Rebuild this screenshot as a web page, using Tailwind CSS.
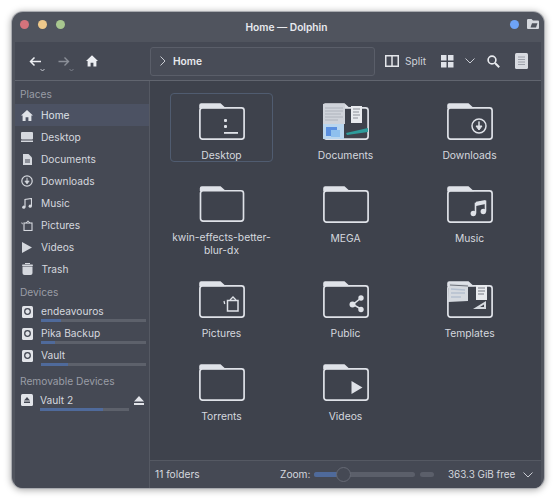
<!DOCTYPE html>
<html><head><meta charset="utf-8"><script src="https://cdn.jsdelivr.net/npm/@tailwindcss/browser@4"></script></head>
<body class="m-0 bg-white">
<svg class="hidden" width="0" height="0">
<symbol id="folder" viewBox="0 0 46 37"><path d="M0.2 5.5V2.2Q0.2 0.2 2.2 0.2H21.5L27 5.2H0.2Z" fill="#dfe2e8"/><rect x="0.9" y="4.9" width="44.2" height="31.2" rx="2.6" fill="none" stroke="#dfe2e8" stroke-width="1.7"/></symbol>
</svg>
<div class="w-[555px] h-[500px] pt-[12px] pl-[12px] font-['Inter','Liberation_Sans',sans-serif] overflow-hidden">
<div class="w-[532px] h-[476px] rounded-[11px] bg-[#50545e] px-[3px] flex flex-col overflow-hidden shadow-[0_0_0_1px_#a9abb0,0_1px_7px_1px_rgba(0,0,0,0.35)]">
  <!-- title bar -->
  <div class="h-[30px] shrink-0 flex items-center relative">
    <div class="flex gap-[9px] pl-[5px] pb-[6px] w-[60px]">
      <span class="w-[9px] h-[9px] rounded-full bg-[#d5737c]"></span>
      <span class="w-[9px] h-[9px] rounded-full bg-[#efc98b]"></span>
      <span class="w-[9px] h-[9px] rounded-full bg-[#a8c78f]"></span>
    </div>
    <div class="flex-1 text-center text-[10.2px] font-semibold text-[#e8eaee] pt-[1px] pl-[17px]">Home — Dolphin</div>
    <div class="flex items-center justify-end gap-[8px] pr-[2px] pb-[6px] w-[60px]">
      <span class="w-[9px] h-[9px] rounded-full bg-[#6ea3f6]"></span>
      <svg width="12" height="10" viewBox="0 0 12 10"><path d="M0 1.2Q0 0 1.2 0H4.5L6 1.5H11Q12 1.5 12 2.5V9Q12 10 11 10H1Q0 10 0 9Z" fill="#d5d8de"/><path d="M3.5 8.5L5 4.2H10.5L9 8.5Z" fill="#4f535d"/></svg>
    </div>
  </div>
  <!-- toolbar -->
  <div class="h-[39px] shrink-0 bg-[#454954] border-b border-[#61656f] flex items-center text-[#dfe2e8]">
    <div class="w-[135px] shrink-0 flex items-center pl-[14px] h-full">
      <svg width="16" height="18" viewBox="0 0 16 18" class="mt-[5px]"><path d="M12 6.5H1.5M5.5 2.5L1.5 6.5L5.5 10.5" fill="none" stroke="#eef0f4" stroke-width="1.5"/><path d="M11.5 14L13.5 16L15.5 14" fill="none" stroke="#c8cbd2" stroke-width="1"/></svg>
      <svg width="16" height="18" viewBox="0 0 16 18" class="ml-[13px] mt-[5px]"><path d="M0.5 6.5H10.5M6.5 2.5L10.5 6.5L6.5 10.5" fill="none" stroke="#8b8f98" stroke-width="1.4"/><path d="M11.5 14L13.5 16L15.5 14" fill="none" stroke="#7c808a" stroke-width="1"/></svg>
      <svg width="12" height="12" viewBox="0 0 12 12" class="ml-[12px]"><path d="M6 0.3L12 6H10.4V11.5H7.4V7.8H4.6V11.5H1.6V6H0Z" fill="#eceef2"/></svg>
    </div>
    <div class="w-[225px] h-[29px] shrink-0 rounded-[3px] border border-[#5a5e69] bg-[#484c57] flex items-center pl-[9px]">
      <svg width="6" height="10" viewBox="0 0 6 10"><path d="M0.5 0.5L5 5L0.5 9.5" fill="none" stroke="#c9ccd3" stroke-width="1"/></svg>
      <span class="ml-[7px] text-[10.2px] font-semibold text-[#e8eaee] pt-[2px]">Home</span>
    </div>
    <svg width="14" height="12" viewBox="0 0 14 12" class="ml-[10px]"><path d="M0.75 0.75H13.25V11.25H0.75ZM7 0.75V11.25" fill="none" stroke="#e4e6ea" stroke-width="1.5"/></svg>
    <span class="ml-[6px] text-[10.2px] text-[#cfd2d9] pt-[2px]">Split</span>
    <svg width="13" height="13" viewBox="0 0 13 13" class="ml-[15px]"><g fill="#dfe2e8"><rect width="5.5" height="5.5"/><rect x="7" width="5.5" height="5.5"/><rect y="7" width="5.5" height="5.5"/><rect x="7" y="7" width="5.5" height="5.5"/></g></svg>
    <svg width="10" height="6" viewBox="0 0 10 6" class="ml-[11px]"><path d="M0.5 0.5L5 5L9.5 0.5" fill="none" stroke="#c9ccd3" stroke-width="1"/></svg>
    <svg width="13" height="13" viewBox="0 0 13 13" class="ml-[12px]"><circle cx="5" cy="5" r="3.9" fill="none" stroke="#e8eaee" stroke-width="1.6"/><path d="M8 8L12.2 12.2" stroke="#e8eaee" stroke-width="2"/></svg>
    <svg width="13" height="16" viewBox="0 0 13 16" class="ml-[15px]"><rect width="13" height="16" rx="1.5" fill="#d8dbe1"/><path d="M3 4H10M3 6.5H10M3 9H10M3 11.5H10" stroke="#8d919a" stroke-width="0.8"/></svg>
  </div>
  <!-- main -->
  <div class="flex-1 flex min-h-0">
    <!-- sidebar -->
    <aside class="w-[135px] shrink-0 bg-[#454954] border-r border-[#555963] text-[10.2px] leading-[22px] text-[#d5d8df] pt-[2px] flex flex-col">
      <div class="h-[21px] pl-[5px] text-[#9a9da6]">Places</div>
      <div class="h-[22px] flex items-center bg-[#4c5263] pl-[6px]"><span class="w-[12px] flex justify-center"><svg width="12" height="11" viewBox="0 0 12 11"><path d="M6 0L12 5.5H10.4V11H7.4V7.2H4.6V11H1.6V5.5H0Z" fill="#dfe2e8"/></svg></span><span class="ml-[8px] text-[#dfe2e8]">Home</span></div>
      <div class="h-[22px] flex items-center pl-[6px]"><span class="w-[12px] flex justify-center"><svg width="12" height="10" viewBox="0 0 12 10"><rect width="12" height="7.5" rx="1" fill="#d5d8de"/><rect y="8.5" width="12" height="1.5" fill="#d5d8de"/></svg></span><span class="ml-[8px]">Desktop</span></div>
      <div class="h-[22px] flex items-center pl-[6px]"><span class="w-[12px] flex justify-center"><svg width="9" height="11" viewBox="0 0 9 11"><path d="M0 0H5.5L9 3.5V11H0Z" fill="#d5d8de"/><path d="M2 6H7M2 8H7" stroke="#454954"/></svg></span><span class="ml-[8px]">Documents</span></div>
      <div class="h-[22px] flex items-center pl-[6px]"><span class="w-[12px] flex justify-center"><svg width="12" height="12" viewBox="0 0 12 12"><circle cx="6" cy="6" r="5.2" fill="none" stroke="#d5d8de" stroke-width="1.2"/><path d="M6 2.8V6H8.2L6 9L3.8 6H6Z" fill="#d5d8de" stroke="#d5d8de" stroke-width="0.6"/></svg></span><span class="ml-[8px]">Downloads</span></div>
      <div class="h-[22px] flex items-center pl-[6px]"><span class="w-[12px] flex justify-center"><svg width="10" height="11" viewBox="0 0 10 11"><path d="M3 9V1.5L9.5 0.5V8" fill="none" stroke="#d5d8de" stroke-width="1.2"/><circle cx="1.8" cy="9.2" r="1.6" fill="#d5d8de"/><circle cx="8.2" cy="8.2" r="1.6" fill="#d5d8de"/></svg></span><span class="ml-[8px]">Music</span></div>
      <div class="h-[22px] flex items-center pl-[6px]"><span class="w-[12px] flex justify-center"><svg width="12" height="11" viewBox="0 0 12 11"><rect x="3" y="3" width="8" height="7.5" fill="none" stroke="#d5d8de" stroke-width="1.1"/><path d="M5 3L7 0.8L9 3M0.8 2.5L1.4 4.2" fill="none" stroke="#d5d8de"/></svg></span><span class="ml-[8px]">Pictures</span></div>
      <div class="h-[22px] flex items-center pl-[6px]"><span class="w-[12px] flex justify-center"><svg width="10" height="11" viewBox="0 0 10 11"><path d="M0 0L10 5.5L0 11Z" fill="#d5d8de"/></svg></span><span class="ml-[8px]">Videos</span></div>
      <div class="h-[22px] flex items-center pl-[6px]"><span class="w-[12px] flex justify-center"><svg width="11" height="12" viewBox="0 0 11 12"><rect x="3" y="0" width="5" height="1" fill="#d5d8de"/><rect y="1.5" width="11" height="1.5" rx="0.7" fill="#d5d8de"/><path d="M0.5 3.6H10.5V10Q10.5 12 8.5 12H2.5Q0.5 12 0.5 10Z" fill="#d5d8de"/></svg></span><span class="ml-[8.5px]">Trash</span></div>
      <div class="h-[22px] pl-[5px] mt-[1px] text-[#9a9da6]">Devices</div>
      <div class="h-[22px] flex items-start pl-[7px]"><svg width="11" height="12" viewBox="0 0 11 12" class="mt-[3px]"><rect width="11" height="12" rx="1.5" fill="#e2e4e9"/><circle cx="5.5" cy="5.5" r="2.8" fill="none" stroke="#454954" stroke-width="1.3"/></svg><div class="ml-[8px] flex-1 pr-[3px]"><div class="h-[16px] leading-[17px]">endeavouros</div><div class="h-[3px] bg-[#5d616b]"><div class="h-full w-[19%] bg-[#4f6a9b]"></div></div></div></div>
      <div class="h-[22px] flex items-start pl-[7px]"><svg width="11" height="12" viewBox="0 0 11 12" class="mt-[3px]"><rect width="11" height="12" rx="1.5" fill="#e2e4e9"/><circle cx="5.5" cy="5.5" r="2.8" fill="none" stroke="#454954" stroke-width="1.3"/></svg><div class="ml-[8px] flex-1 pr-[3px]"><div class="h-[16px] leading-[17px]">Pika Backup</div><div class="h-[3px] bg-[#5d616b]"><div class="h-full w-[13%] bg-[#4f6a9b]"></div></div></div></div>
      <div class="h-[22px] flex items-start pl-[7px]"><svg width="11" height="12" viewBox="0 0 11 12" class="mt-[3px]"><rect width="11" height="12" rx="1.5" fill="#e2e4e9"/><circle cx="5.5" cy="5.5" r="2.8" fill="none" stroke="#454954" stroke-width="1.3"/></svg><div class="ml-[8px] flex-1 pr-[3px]"><div class="h-[16px] leading-[17px]">Vault</div><div class="h-[3px] bg-[#5d616b]"><div class="h-full w-[26%] bg-[#4f6a9b]"></div></div></div></div>
      <div class="h-[22px] pl-[5px] mt-[1px] text-[#9a9da6]">Removable Devices</div>
      <div class="h-[22px] flex items-start pl-[6px]"><svg width="12" height="12" viewBox="0 0 12 12" class="mt-[2px]"><rect width="12" height="12" rx="1.5" fill="#e2e4e9"/><path d="M6 3L9 6.5H3ZM3 7.5H9V9H3Z" fill="#454954"/></svg><div class="ml-[7px] w-[89px]"><div class="h-[16px] leading-[17px]">Vault 2</div><div class="h-[3px] bg-[#5d616b]"><div class="h-full w-[71%] bg-[#4f6a9b]"></div></div></div><svg width="10" height="9" viewBox="0 0 10 9" class="ml-[5px] mt-[4px]"><path d="M5 0L10 5.5H0ZM0 7H10V9H0Z" fill="#e2e4e9"/></svg></div>
    </aside>
    <!-- content -->
    <div class="flex-1 flex flex-col min-w-0 bg-[#3e424c]">
      <main class="flex-1 pt-[12px] pl-[20px] grid grid-cols-[103px_103px_103px] gap-x-[21px] gap-y-[14px] content-start text-[10.3px] leading-[13px] text-[#d5d8df] text-center">
        <div class="h-[69px] rounded-[4px] border border-[#505c70] flex flex-col items-center pt-[9px]">
          <div class="relative w-[46px] h-[37px]"><svg width="46" height="37"><use href="#folder"/></svg><svg width="15" height="16" viewBox="0 0 15 16" class="absolute left-[25px] top-[16px]"><rect x="0" y="0" width="3" height="3" rx="1" fill="#dfe2e8"/><rect x="0" y="6" width="3" height="3" rx="1" fill="#dfe2e8"/><rect x="0" y="13" width="14" height="1.8" fill="#dfe2e8"/></svg></div>
          <div class="mt-[9px]">Desktop</div>
        </div>
        <div class="h-[69px] flex flex-col items-center pt-[10px]">
          <div class="relative w-[46px] h-[37px]"><svg width="46" height="37"><use href="#folder"/>
            <rect x="0" y="1" width="22" height="20" fill="#cfd3da"/><path d="M2 5H20M2 8H20M2 11H18M2 14H20M2 17H15" stroke="#aeb3bc"/>
            <rect x="0" y="21" width="21" height="15" fill="#b9d6ef"/><rect x="3" y="24" width="11" height="9" fill="#5a8fe0"/><rect x="8" y="27" width="9" height="7" fill="#8fc0ee"/>
            <rect x="28" y="3" width="11" height="17" fill="#e8eaee"/><path d="M30 6H37M30 9H36M30 12H37M30 15H35" stroke="#8c9098"/>
            <path d="M23 30L45 25V29L24 32Z" fill="#2e9c9c"/></svg></div>
          <div class="mt-[9px]">Documents</div>
        </div>
        <div class="h-[69px] flex flex-col items-center pt-[10px]">
          <div class="relative w-[46px] h-[37px]"><svg width="46" height="37"><use href="#folder"/><circle cx="32" cy="23" r="7" fill="none" stroke="#dfe2e8" stroke-width="1.5"/><path d="M32 18.5V23H35L32 27L29 23H32Z" fill="#dfe2e8" stroke="#dfe2e8"/></svg></div>
          <div class="mt-[9px]">Downloads</div>
        </div>
        <div class="h-[81px] flex flex-col items-center pt-[10px]">
          <svg width="46" height="37"><use href="#folder"/></svg>
          <div class="mt-[9px] w-[101px]">kwin-effects-better-blur-dx</div>
        </div>
        <div class="h-[81px] flex flex-col items-center pt-[10px]">
          <svg width="46" height="37"><use href="#folder"/></svg>
          <div class="mt-[9px]">MEGA</div>
        </div>
        <div class="h-[81px] flex flex-col items-center pt-[10px]">
          <svg width="46" height="37"><use href="#folder"/><path d="M28.5 27.5V17.5L38.5 15.5V25.5" fill="none" stroke="#dfe2e8" stroke-width="1.6"/><path d="M29 15.8L38.5 14V18L29 20Z" fill="#dfe2e8"/><circle cx="26.3" cy="27.5" r="2.7" fill="#dfe2e8"/><circle cx="36.3" cy="25.5" r="2.7" fill="#dfe2e8"/></svg>
          <div class="mt-[9px]">Music</div>
        </div>
        <div class="h-[69px] flex flex-col items-center pt-[10px]">
          <svg width="46" height="37"><use href="#folder"/><rect x="28.5" y="19.5" width="10.5" height="10.5" fill="none" stroke="#dfe2e8" stroke-width="1.5"/><path d="M31 19L34 16L37 19M25 20L25.7 23" fill="none" stroke="#dfe2e8" stroke-width="1.3"/></svg>
          <div class="mt-[9px]">Pictures</div>
        </div>
        <div class="h-[69px] flex flex-col items-center pt-[10px]">
          <svg width="46" height="37"><use href="#folder"/><path d="M38 17L30 23.5L38 28" fill="none" stroke="#dfe2e8" stroke-width="1.5"/><circle cx="38" cy="17" r="2.7" fill="#dfe2e8"/><circle cx="29.5" cy="23.5" r="3" fill="#dfe2e8"/><circle cx="38" cy="28.5" r="2.7" fill="#dfe2e8"/></svg>
          <div class="mt-[9px]">Public</div>
        </div>
        <div class="h-[69px] flex flex-col items-center pt-[10px]">
          <svg width="46" height="37"><use href="#folder"/><path d="M2 2L21 3.5L21 20L1 21Z" fill="#d5d9df"/><path d="M3 4L21 5" stroke="#6c7079"/><path d="M4 8L18 9M4 12L18 12M4 16L14 16" stroke="#b5c0d0" stroke-width="1.5"/><rect x="29" y="4" width="11" height="15" fill="#e8eaee"/><path d="M31 7H38M31 10H38M31 13H37" stroke="#777b84"/><path d="M26 28L39 20V28ZM33 26H37V23.5Z" fill="#d5d9df" fill-rule="evenodd"/></svg>
          <div class="mt-[9px]">Templates</div>
        </div>
        <div class="h-[69px] flex flex-col items-center pt-[10px]">
          <svg width="46" height="37"><use href="#folder"/></svg>
          <div class="mt-[9px]">Torrents</div>
        </div>
        <div class="h-[69px] flex flex-col items-center pt-[10px]">
          <svg width="46" height="37"><use href="#folder"/><path d="M28.5 17L39.5 23.5L28.5 30Z" fill="#dfe2e8"/></svg>
          <div class="mt-[9px]">Videos</div>
        </div>
      </main>
      <!-- status -->
      <div class="h-[28px] shrink-0 bg-[#454954] border-t border-[#555963] flex items-center text-[10.2px] text-[#d5d8df]">
        <span class="w-[130px] pl-[5px] shrink-0">11 folders</span>
        <span class="w-[34px] shrink-0">Zoom:</span>
        <div class="relative w-[101px] h-[5px] rounded-full bg-[#5b5f6a] shrink-0"><div class="h-full w-[24px] rounded-l-full bg-[#4f6a9b]"></div><span class="absolute left-[22px] -top-[5px] w-[15px] h-[15px] rounded-full bg-[#454954] border border-[#666a75]"></span></div>
        <span class="ml-[5px] w-[14px] h-[5px] rounded-full bg-[#5b5f6a] shrink-0"></span>
        <span class="ml-[14px] shrink-0 text-[9.9px]">363.3 GiB free</span>
        <svg width="10" height="6" viewBox="0 0 10 6" class="ml-[8px] shrink-0"><path d="M0.5 0.5L5 5L9.5 0.5" fill="none" stroke="#c9ccd3" stroke-width="1"/></svg>
      </div>
    </div>
  </div>
</div>
</div>
</body></html>
